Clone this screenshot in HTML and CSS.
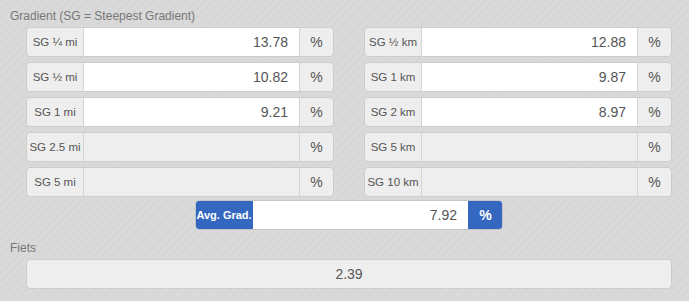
FILE: index.html
```html
<!DOCTYPE html>
<html lang="en">
<head>
  <meta charset="UTF-8">
  <meta name="viewport" content="width=device-width, initial-scale=1.0">
  <title>Gradient</title>
  <link rel="stylesheet" href="styles.css">
</head>
<body>
  <div class="panel">
    <div class="section-title">Gradient (SG = Steepest Gradient)</div>

    <div class="grad-grid">
      <!-- left column: miles, right column: km -->
      <div class="group"><div class="addon">SG ¼ mi</div><div class="value">13.78</div><div class="unit">%</div></div>
      <div class="group"><div class="addon">SG ½ km</div><div class="value">12.88</div><div class="unit">%</div></div>

      <div class="group"><div class="addon">SG ½ mi</div><div class="value">10.82</div><div class="unit">%</div></div>
      <div class="group"><div class="addon">SG 1 km</div><div class="value">9.87</div><div class="unit">%</div></div>

      <div class="group"><div class="addon">SG 1 mi</div><div class="value">9.21</div><div class="unit">%</div></div>
      <div class="group"><div class="addon">SG 2 km</div><div class="value">8.97</div><div class="unit">%</div></div>

      <div class="group"><div class="addon">SG 2.5 mi</div><div class="value empty"></div><div class="unit">%</div></div>
      <div class="group"><div class="addon">SG 5 km</div><div class="value empty"></div><div class="unit">%</div></div>

      <div class="group"><div class="addon">SG 5 mi</div><div class="value empty"></div><div class="unit">%</div></div>
      <div class="group"><div class="addon">SG 10 km</div><div class="value empty"></div><div class="unit">%</div></div>
    </div>

    <div class="avg-row">
      <div class="group avg"><div class="addon">Avg. Grad.</div><div class="value">7.92</div><div class="unit">%</div></div>
    </div>

    <div class="section-title fiets-title">Fiets</div>
    <div class="fiets-box">2.39</div>
  </div>
</body>
</html>
```

FILE: styles.css
```css
* {
  margin: 0;
  padding: 0;
  box-sizing: border-box;
  font-family: 'Liberation Sans', Arial, sans-serif;
}

body {
  width: 689px;
  height: 301px;
  overflow: hidden;
  background-color: #d8d8d8;
  background-image: repeating-linear-gradient(135deg, #d7d7d7 0, #d7d7d7 3px, #dadada 3px, #dadada 6px);
}

.panel {
  padding: 8px 17px 0 10px;
}

.section-title {
  font-size: 12px;
  line-height: 16px;
  color: #777;
  margin-bottom: 3px;
}

.grad-grid {
  display: grid;
  grid-template-columns: 308px 308px;
  column-gap: 30px;
  row-gap: 5px;
  margin-left: 16px;
}

.group {
  display: flex;
  height: 30px;
  border: 1px solid #cdcdcd;
  border-radius: 4px;
  overflow: hidden;
  background-color: #eee;
}

.addon {
  width: 56px;
  display: flex;
  align-items: center;
  justify-content: center;
  font-size: 11.5px;
  color: #555;
  white-space: nowrap;
}

.value {
  flex: 1;
  display: flex;
  align-items: center;
  justify-content: flex-end;
  padding-right: 11px;
  background-color: #fff;
  border-left: 1px solid #d4d4d4;
  border-right: 1px solid #d4d4d4;
  font-size: 14px;
  color: #555;
}

.value.empty {
  background-color: #eee;
}

.unit {
  width: 33px;
  display: flex;
  align-items: center;
  justify-content: center;
  font-size: 14px;
  color: #555;
}

.avg-row {
  display: flex;
  justify-content: center;
  margin: 3px 0 0 16px;
  width: 646px;
}

.avg {
  width: 308px;
  border-color: #c4c4c4;
}

.avg .addon {
  background-color: #3467c0;
  color: #fff;
  font-size: 11px;
  font-weight: bold;
}

.avg .value {
  border-color: #3467c0;
}

.avg .unit {
  background-color: #3467c0;
  color: #fff;
  font-weight: bold;
}

.fiets-title {
  margin-top: 10px;
}

.fiets-box {
  margin-left: 16px;
  height: 30px;
  border: 1px solid #cdcdcd;
  border-radius: 4px;
  background-color: #eee;
  display: flex;
  align-items: center;
  justify-content: center;
  font-size: 14px;
  color: #555;
}
```
